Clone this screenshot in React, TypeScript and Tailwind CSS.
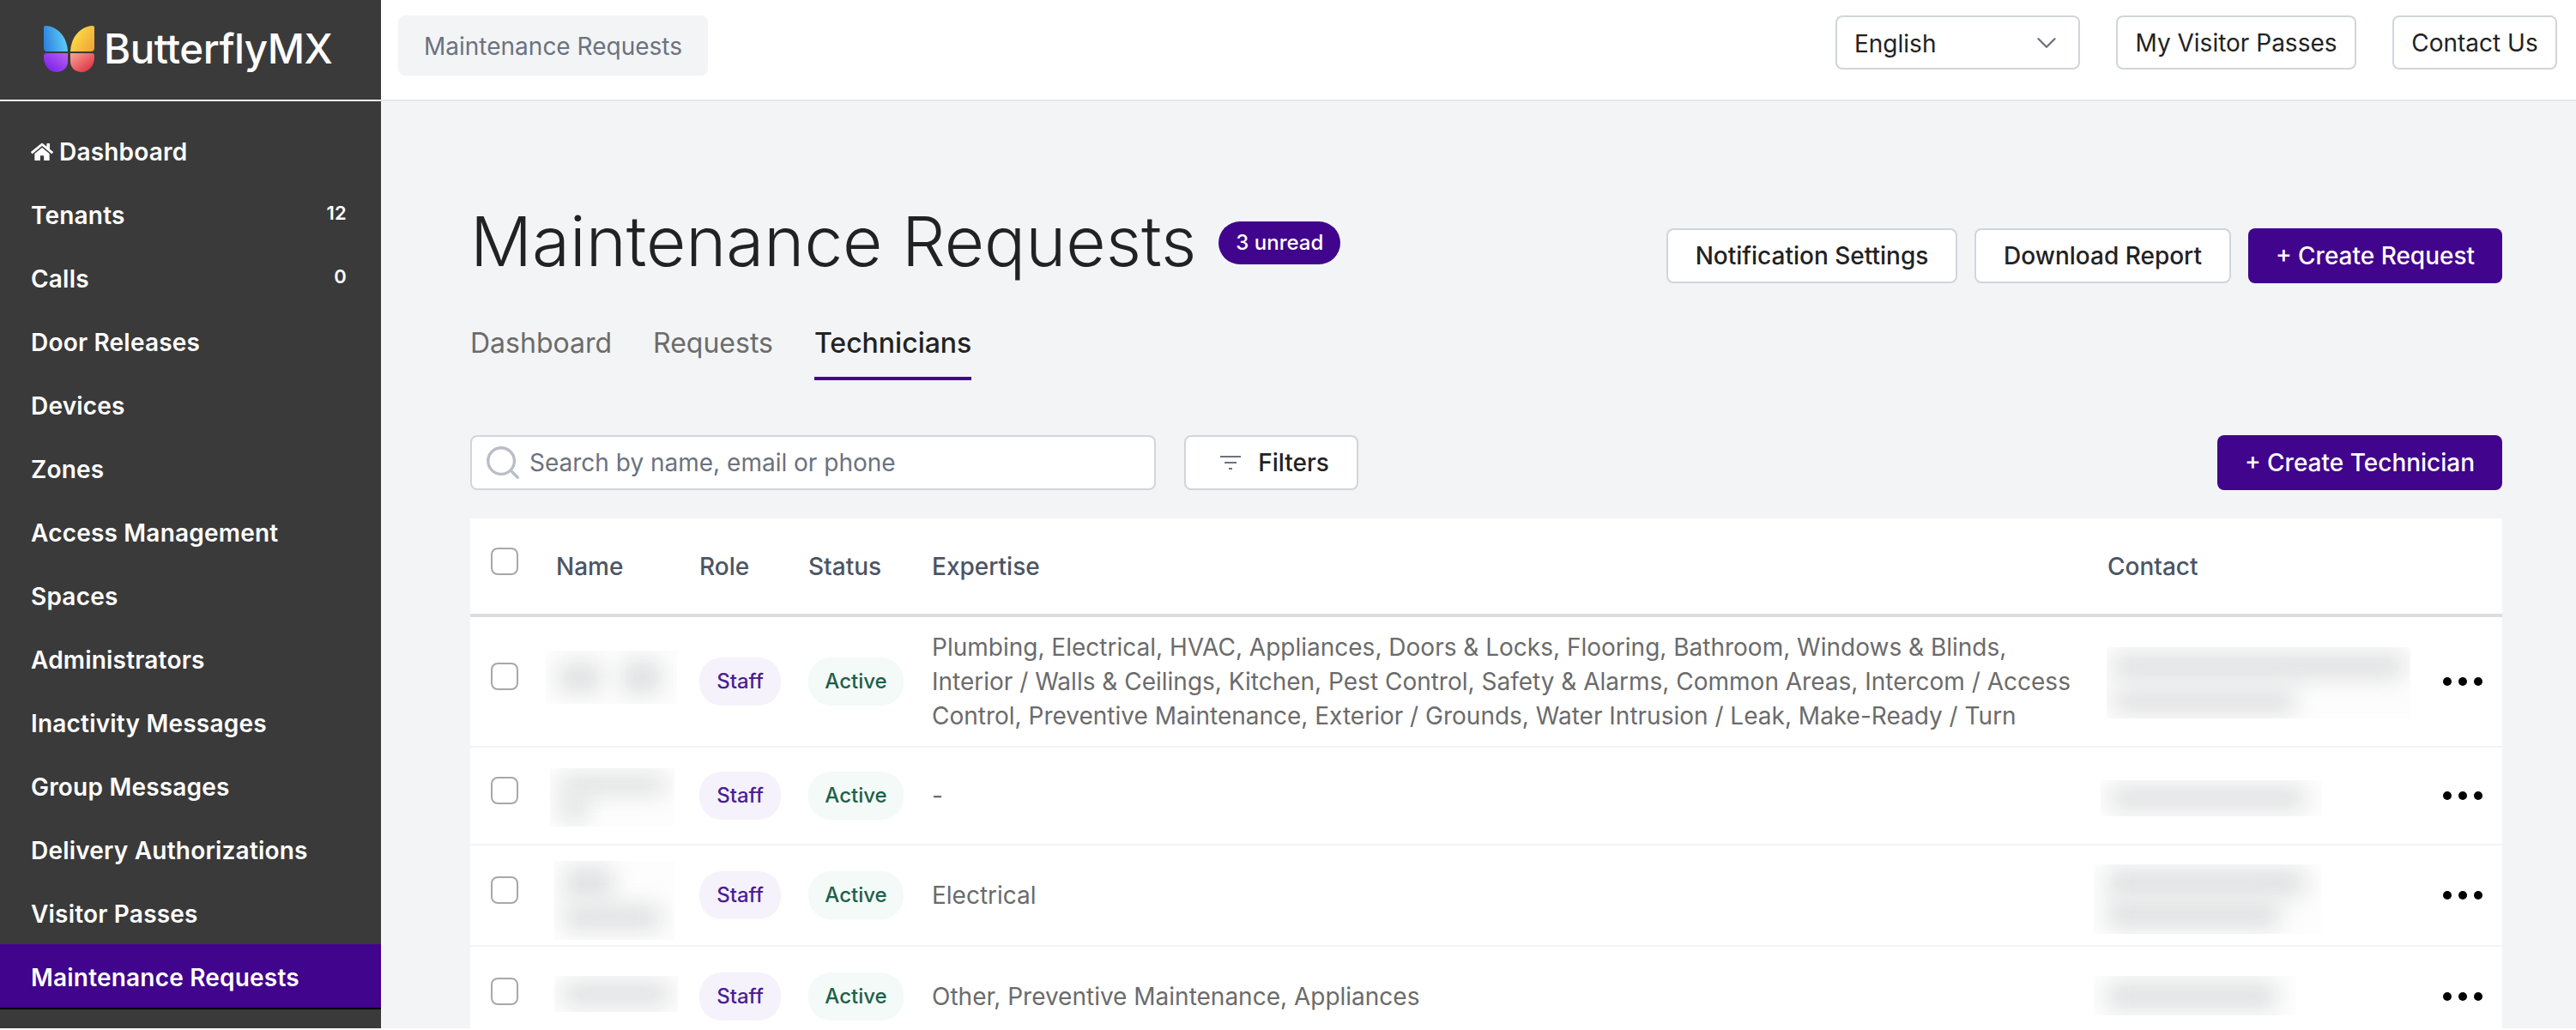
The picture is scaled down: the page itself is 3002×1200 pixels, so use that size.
import { FaHome } from "react-icons/fa";
import { ChevronDown, Search } from "lucide-react";

const navItems: { label: string; count?: number }[] = [
  { label: "Tenants", count: 12 },
  { label: "Calls", count: 0 },
  { label: "Door Releases" },
  { label: "Devices" },
  { label: "Zones" },
  { label: "Access Management" },
  { label: "Spaces" },
  { label: "Administrators" },
  { label: "Inactivity Messages" },
  { label: "Group Messages" },
  { label: "Delivery Authorizations" },
  { label: "Visitor Passes" },
];

interface Bar {
  left: number;
  top: number;
  w: number;
  h: number;
}

interface BlurPatch {
  w: number;
  h: number;
  indent: number; // distance from the column's left edge
  shift: number; // nudge from the row's centre line
  bars: Bar[];
}

interface Row {
  h: number;
  expertise: string;
  name: BlurPatch;
  contact: BlurPatch;
}

const rows: Row[] = [
  {
    h: 153,
    expertise:
      "Plumbing, Electrical, HVAC, Appliances, Doors & Locks, Flooring, Bathroom, Windows & Blinds, Interior / Walls & Ceilings, Kitchen, Pest Control, Safety & Alarms, Common Areas, Intercom / Access Control, Preventive Maintenance, Exterior / Grounds, Water Intrusion / Leak, Make-Ready / Turn",
    name: {
      w: 153,
      h: 62,
      indent: 12,
      shift: -5,
      bars: [
        { left: 16, top: 14, w: 48, h: 34 },
        { left: 90, top: 12, w: 44, h: 38 },
      ],
    },
    contact: {
      w: 354,
      h: 83,
      indent: 23,
      shift: 1,
      bars: [
        { left: 8, top: 8, w: 338, h: 28 },
        { left: 8, top: 50, w: 212, h: 26 },
      ],
    },
  },
  {
    h: 114,
    expertise: "-",
    name: {
      w: 145,
      h: 68,
      indent: 17,
      shift: 2,
      bars: [
        { left: 12, top: 8, w: 122, h: 22 },
        { left: 12, top: 34, w: 32, h: 26 },
      ],
    },
    contact: {
      w: 258,
      h: 42,
      indent: 16,
      shift: 3,
      bars: [{ left: 12, top: 8, w: 226, h: 26 }],
    },
  },
  {
    h: 118,
    expertise: "Electrical",
    name: {
      w: 140,
      h: 92,
      indent: 22,
      shift: 6,
      bars: [
        { left: 12, top: 8, w: 56, h: 34 },
        { left: 12, top: 52, w: 112, h: 28 },
      ],
    },
    contact: {
      w: 265,
      h: 81,
      indent: 8,
      shift: 4,
      bars: [
        { left: 16, top: 6, w: 230, h: 30 },
        { left: 16, top: 44, w: 200, h: 30 },
      ],
    },
  },
  {
    h: 118,
    expertise: "Other, Preventive Maintenance, Appliances",
    name: {
      w: 144,
      h: 42,
      indent: 22,
      shift: -3,
      bars: [{ left: 10, top: 8, w: 124, h: 26 }],
    },
    contact: {
      w: 235,
      h: 46,
      indent: 8,
      shift: -1,
      bars: [{ left: 16, top: 8, w: 196, h: 30 }],
    },
  },
];

function Blurred({ patch }: { patch: BlurPatch }) {
  return (
    <div
      className="relative overflow-hidden bg-[#fdfdfd]"
      style={{
        width: patch.w,
        height: patch.h,
        marginLeft: patch.indent,
        transform: `translateY(${patch.shift}px)`,
      }}
    >
      {patch.bars.map((bar, i) => (
        <div
          key={i}
          className="absolute bg-[#dedfe0] blur-[13px]"
          style={{ left: bar.left, top: bar.top, width: bar.w, height: bar.h }}
        />
      ))}
    </div>
  );
}

function Logo() {
  return (
    <svg width="59" height="54" viewBox="0 0 59 54">
      <defs>
        <linearGradient id="wingTL" x1="0" y1="0.7" x2="1" y2="0.5">
          <stop offset="0" stopColor="#2d82de" />
          <stop offset="1" stopColor="#5fd0fa" />
        </linearGradient>
        <linearGradient id="wingTR" x1="0" y1="0.2" x2="1" y2="0.9">
          <stop offset="0" stopColor="#fde648" />
          <stop offset="1" stopColor="#f0a238" />
        </linearGradient>
        <linearGradient id="wingBL" x1="0" y1="1" x2="1" y2="0">
          <stop offset="0" stopColor="#7417ea" />
          <stop offset="1" stopColor="#b962f2" />
        </linearGradient>
        <linearGradient id="wingBR" x1="0" y1="0" x2="1" y2="1">
          <stop offset="0" stopColor="#f6a596" />
          <stop offset="1" stopColor="#de2338" />
        </linearGradient>
      </defs>
      <path d="M2 0C16 1 27 12 28 30H4Q0 30 0 26V2Q0 0 2 0Z" fill="url(#wingTL)" />
      <path d="M57 0C43 1 32 12 31 30H55Q59 30 59 26V2Q59 0 57 0Z" fill="url(#wingTR)" />
      <path d="M3 32H28V42C28 49 22 54 15 54C7 54 0 47 0 37V35Q0 32 3 32Z" fill="url(#wingBL)" />
      <path d="M56 32H31V42C31 49 37 54 44 54C52 54 59 47 59 37V35Q59 32 56 32Z" fill="url(#wingBR)" />
    </svg>
  );
}

function Sidebar() {
  return (
    <aside className="flex w-[444px] shrink-0 flex-col bg-[#3a3a3a] text-[28px] font-semibold tracking-[0.2px] text-white">
      <div className="flex h-[116px] items-center gap-[11px] pb-[2px] pl-[51px]">
        <Logo />
        <span className="text-[47.5px] font-medium tracking-[-0.5px] text-white">ButterflyMX</span>
      </div>
      <div className="h-[2px] bg-[#f0f0f0]" />
      <nav className="pt-[20px]">
        <a className="flex h-[74px] items-center gap-[7px] px-[36px] pt-[3px]">
          <FaHome className="h-[26px] w-[26px]" />
          <span>Dashboard</span>
        </a>
        {navItems.map((item) => (
          <a key={item.label} className="flex h-[74px] items-center justify-between pl-[36px] pr-[40px] pt-[3px]">
            <span>{item.label}</span>
            {item.count !== undefined && <span className="mb-[4px] text-[22px]">{item.count}</span>}
          </a>
        ))}
        <a className="flex h-[76px] items-center border-b-2 border-black bg-[#41048c] px-[36px] pt-[3px]">
          Maintenance Requests
        </a>
      </nav>
    </aside>
  );
}

function TopBar() {
  return (
    <header className="flex h-[118px] shrink-0 items-start border-b-2 border-[#e5e7eb] bg-white pl-[20px] pr-[22px] pt-[18px] text-[28px] text-[#222222]">
      <div className="flex h-[70px] w-[361px] items-center justify-center rounded-lg bg-[#f3f4f6] pt-[2px] text-[#6b7280]">
        Maintenance Requests
      </div>
      <div className="ml-auto flex h-[63px] w-[285px] items-center justify-between rounded-lg border-2 border-[#d1d5db] pl-[20px] pr-[18px]">
        <span className="pt-[2px]">English</span>
        <ChevronDown className="h-[38px] w-[38px] text-[#6b7280]" strokeWidth={1.5} />
      </div>
      <div className="ml-[42px] flex h-[63px] w-[280px] items-center justify-center rounded-lg border-2 border-[#d1d5db]">
        My Visitor Passes
      </div>
      <div className="ml-[42px] flex h-[63px] w-[192px] items-center justify-center rounded-lg border-2 border-[#d1d5db]">
        Contact Us
      </div>
    </header>
  );
}

function OutlineButton({ label, width }: { label: string; width: string }) {
  return (
    <button className={`h-[64px] rounded-lg border-2 border-[#d1d5db] bg-white text-[28px] font-medium text-[#222222] ${width}`}>
      {label}
    </button>
  );
}

function Checkbox() {
  return <div className="mb-[12px] h-[32px] w-[32px] rounded-lg border-2 border-[#a8a8a8] bg-white" />;
}

function Badge({ label, className }: { label: string; className: string }) {
  return (
    <span className={`inline-flex h-[56px] items-center justify-center rounded-[26px] text-[24px] font-medium ${className}`}>
      {label}
    </span>
  );
}

function Dots() {
  return (
    <div className="flex items-center gap-[8px]">
      <span className="h-[10px] w-[10px] rounded-full bg-black" />
      <span className="h-[10px] w-[10px] rounded-full bg-black" />
      <span className="h-[10px] w-[10px] rounded-full bg-black" />
    </div>
  );
}

function TechniciansTable() {
  return (
    <table className="w-full table-fixed bg-white text-left text-[28px]">
      <colgroup>
        <col className="w-[76px]" />
        <col className="w-[167px]" />
        <col className="w-[127px]" />
        <col className="w-[144px]" />
        <col className="w-[1370px]" />
        <col className="w-[415px]" />
        <col />
      </colgroup>
      <thead>
        <tr className="h-[113px] border-b-4 border-[#dddddd] text-[#4b5563]">
          <th className="pl-[24px] align-middle">
            <Checkbox />
          </th>
          <th className="pl-[24px] font-medium">Name</th>
          <th className="pl-[24px] font-medium">Role</th>
          <th className="pl-[24px] font-medium">Status</th>
          <th className="pl-[24px] font-medium">Expertise</th>
          <th className="pl-[24px] font-medium">Contact</th>
          <th />
        </tr>
      </thead>
      <tbody>
        {rows.map((row, i) => (
          <tr key={i} className="border-b-2 border-[#f3f4f6]" style={{ height: row.h }}>
            <td className="pl-[24px] align-middle">
              <Checkbox />
            </td>
            <td>
              <Blurred patch={row.name} />
            </td>
            <td className="pl-[24px]">
              <Badge label="Staff" className="w-[95px] bg-[#f5f2fb] text-[#4c1d95]" />
            </td>
            <td className="pl-[24px]">
              <Badge label="Active" className="w-[111px] bg-[#f3faf7] text-[#1f5f4a]" />
            </td>
            <td className="pl-[24px] pr-[10px] leading-[40px] text-[#6b6b6b]">{row.expertise}</td>
            <td>
              <Blurred patch={row.contact} />
            </td>
            <td>
              <Dots />
            </td>
          </tr>
        ))}
      </tbody>
    </table>
  );
}

export default function App() {
  return (
    <div className="flex h-[1198px] w-[3002px] overflow-hidden bg-[#f3f4f6] font-['Inter',sans-serif]">
      <Sidebar />
      <div className="flex min-w-0 flex-1 flex-col">
        <TopBar />
        <main className="pl-[104px] pr-[86px] pt-[116px]">
          <div className="flex h-[100px] items-start">
            <h1 className="-mt-[3px] text-[80px] font-light leading-[100px] text-[#222222]">Maintenance Requests</h1>
            <span className="ml-[26px] mt-[24px] flex h-[50px] w-[142px] items-center justify-center rounded-full bg-[#41048c] text-[24px] font-medium text-white">
              3 unread
            </span>
            <div className="ml-auto mt-[32px] flex gap-[20px]">
              <OutlineButton label="Notification Settings" width="w-[339px]" />
              <OutlineButton label="Download Report" width="w-[299px]" />
              <button className="h-[64px] w-[296px] rounded-lg bg-[#41048c] text-[28px] font-medium text-white">
                + Create Request
              </button>
            </div>
          </div>
          <div className="mt-[42px] flex gap-[48px] text-[32px] text-[#6b6b6b]">
            <span className="h-[67px]">Dashboard</span>
            <span className="h-[67px]">Requests</span>
            <span className="h-[67px] border-b-4 border-[#41048c] font-medium text-[#222222]">Technicians</span>
          </div>
          <div className="mt-[64px] flex items-center">
            <div className="flex h-[64px] w-[799px] items-center gap-[8px] rounded-lg border-2 border-[#d1d5db] bg-white pl-[13px] text-[28px] text-[#6b7280]">
              <Search className="h-[46px] w-[46px] text-[#b9bec6]" strokeWidth={1.75} />
              <span>Search by name, email or phone</span>
            </div>
            <button className="ml-[33px] flex h-[64px] w-[203px] items-center justify-center gap-[20px] rounded-lg border-2 border-[#d1d5db] bg-white pl-[8px] text-[28px] font-medium text-[#222222]">
              <svg width="24" height="16" viewBox="0 0 24 16" className="text-[#6b7280]">
                <path d="M0 1H24M5 8H19M10 15H14" stroke="currentColor" strokeWidth="2" />
              </svg>
              Filters
            </button>
            <button className="ml-auto h-[64px] w-[332px] rounded-lg bg-[#41048c] text-[28px] font-medium text-white">
              + Create Technician
            </button>
          </div>
          <div className="mt-[33px]">
            <TechniciansTable />
          </div>
        </main>
      </div>
    </div>
  );
}
